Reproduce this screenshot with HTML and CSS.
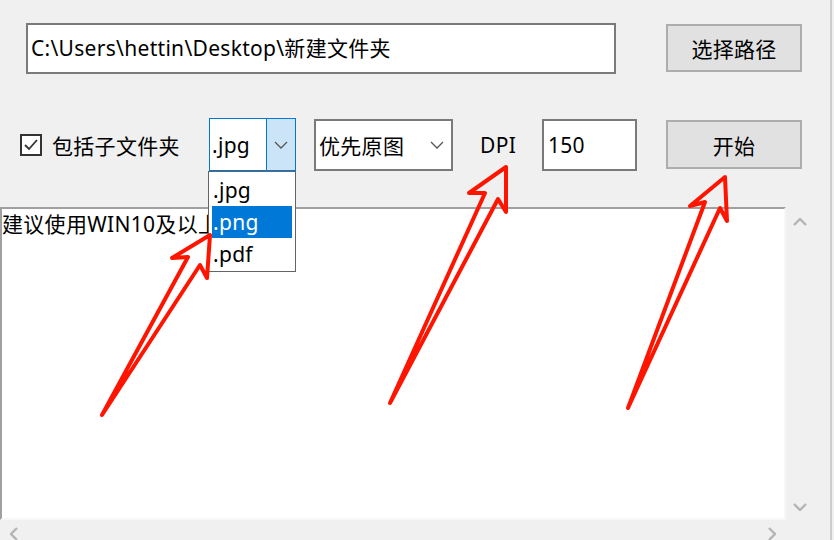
FILE: index.html
```
<!DOCTYPE html>
<html lang="zh-CN">

<head>
    <meta charset="UTF-8">
    <meta name="viewport" content="width=device-width, initial-scale=1.0">
    <title>图片转换</title>
    <link rel="stylesheet" href="styles.css">
</head>

<body>
    <div class="window">
        <div class="path-row">
            <div class="textbox path-box">C:\Users\hettin\Desktop\新建文件夹</div>
            <button class="btn btn-path">选择路径</button>
        </div>

        <div class="options-row">
            <label class="check">
                <span class="check-box">
                    <svg width="18" height="18" viewBox="0 0 18 18"><polyline points="3,9 7,13 15,4" fill="none" stroke="#333" stroke-width="1.8"/></svg>
                </span>
                包括子文件夹
            </label>
            <div class="combo combo-open">
                <span class="combo-value">.jpg</span>
                <span class="combo-btn">
                    <svg width="14" height="8" viewBox="0 0 14 8"><polyline points="1,1 7,7 13,1" fill="none" stroke="#555" stroke-width="1.3"/></svg>
                </span>
            </div>
            <div class="combo combo-mode">
                <span class="combo-value">优先原图</span>
                <svg class="combo-arrow" width="14" height="8" viewBox="0 0 14 8"><polyline points="1,1 7,7 13,1" fill="none" stroke="#555" stroke-width="1.3"/></svg>
            </div>
            <span class="dpi-label">DPI</span>
            <div class="textbox dpi-box">150</div>
            <button class="btn btn-start">开始</button>
        </div>

        <div class="log">
            <div class="log-body">
                <div class="log-text">建议使用WIN10及以上</div>
                <div class="vscroll">
                    <svg width="14" height="8" viewBox="0 0 14 8"><polyline points="1,7 7,1 13,7" fill="none" stroke="#b4b4b4" stroke-width="2.4"/></svg>
                    <svg width="14" height="8" viewBox="0 0 14 8"><polyline points="1,1 7,7 13,1" fill="none" stroke="#b4b4b4" stroke-width="2.4"/></svg>
                </div>
            </div>
            <div class="hscroll">
                <svg width="8" height="14" viewBox="0 0 8 14"><polyline points="7,1 1,7 7,13" fill="none" stroke="#b4b4b4" stroke-width="2.4"/></svg>
                <svg width="8" height="14" viewBox="0 0 8 14"><polyline points="1,1 7,7 1,13" fill="none" stroke="#b4b4b4" stroke-width="2.4"/></svg>
            </div>
        </div>

        <ul class="dropdown">
            <li>.jpg</li>
            <li class="selected">.png</li>
            <li>.pdf</li>
        </ul>

        <svg class="arrows" width="834" height="540" viewBox="0 0 834 540">
            <polygon points="102,415 188,257 172,258 210,235 207,278 200,265" />
            <polygon points="390,403 485,193 469,193 506,167 506,212 498,199" />
            <polygon points="628,408 705,202 690,206 725,177 727,221 720,208" />
        </svg>
    </div>
</body>

</html>
```

FILE: styles.css
```
body {
    margin: 0;
    background-color: #f0f0f0;
    font-family: "Noto Sans", "Noto Sans CJK SC", sans-serif;
    font-size: 21px;
    letter-spacing: 0.3px;
    color: #000;
}

.window {
    position: relative;
    width: 830px;
    height: 540px;
    border-right: 2px solid #cdcdcd;
    overflow: hidden;
}

.textbox {
    box-sizing: border-box;
    background-color: #fff;
    border: 2px solid #7a7a7a;
    white-space: nowrap;
}

.btn {
    box-sizing: border-box;
    width: 136px;
    background-color: #e1e1e1;
    border: 2px solid #adadad;
    font-family: inherit;
    font-size: 21px;
    letter-spacing: 0.3px;
    color: #000;
    padding: 0;
}

.path-row {
    display: flex;
    align-items: flex-start;
    padding: 23px 0 0 26px;
}

.path-box {
    width: 590px;
    height: 51px;
    line-height: 47px;
    padding-left: 3px;
}

.btn-path {
    height: 48px;
    margin: 1px 0 0 50px;
}

.options-row {
    display: flex;
    align-items: center;
    height: 53px;
    margin-top: 44px;
    padding-left: 20px;
}

.check {
    display: flex;
    align-items: center;
    gap: 10px;
    width: 189px;
}

.check-box {
    box-sizing: border-box;
    width: 22px;
    height: 22px;
    border: 2px solid #333;
    background-color: #fff;
    display: flex;
    align-items: center;
    justify-content: center;
}

.combo {
    box-sizing: border-box;
    display: flex;
    align-items: center;
    background-color: #fff;
}

.combo-open {
    width: 87px;
    height: 53px;
    border: 1px solid #0078d7;
}

.combo-open .combo-value {
    flex: 1;
    padding-left: 2px;
}

.combo-btn {
    width: 29px;
    height: 100%;
    box-sizing: border-box;
    background-color: #cce4f7;
    border-left: 1px solid #0078d7;
    display: flex;
    align-items: center;
    justify-content: center;
}

.combo-mode {
    width: 139px;
    height: 52px;
    margin-left: 18px;
    border: 2px solid #7a7a7a;
    padding: 0 7px 0 3px;
}

.combo-mode .combo-value {
    flex: 1;
}

.dpi-label {
    width: 62px;
    margin-left: 27px;
}

.dpi-box {
    width: 95px;
    height: 52px;
    line-height: 48px;
    padding-left: 4px;
}

.btn-start {
    height: 49px;
    margin-left: 29px;
}

.log {
    margin-top: 36px;
}

.log-body {
    display: flex;
    height: 313px;
}

.log-text {
    box-sizing: border-box;
    width: 786px;
    background-color: #fff;
    border-top: 2px solid #a0a0a0;
    border-left: 2px solid #a0a0a0;
    border-right: 2px solid #f7f7f7;
    border-bottom: 2px solid #f7f7f7;
    line-height: 30px;
    white-space: nowrap;
}

.vscroll {
    width: 27px;
    display: flex;
    flex-direction: column;
    justify-content: space-between;
    align-items: center;
    padding: 11px 0 9px;
}

.hscroll {
    width: 786px;
    height: 20px;
    display: flex;
    justify-content: space-between;
    align-items: center;
    padding: 8px 10px 0;
    box-sizing: border-box;
}

.dropdown {
    position: absolute;
    left: 208px;
    top: 171px;
    width: 88px;
    box-sizing: border-box;
    margin: 0;
    padding: 2px 3px 1px;
    list-style: none;
    background-color: #fff;
    border: 1px solid #646464;
}

.dropdown li {
    height: 32px;
    line-height: 32px;
    padding-left: 1px;
}

.dropdown .selected {
    background-color: #0078d7;
    color: #fff;
}

.arrows {
    position: absolute;
    left: 0;
    top: 0;
    pointer-events: none;
}

.arrows polygon {
    fill: none;
    stroke: #ff1400;
    stroke-width: 4;
    stroke-linejoin: round;
}
```
